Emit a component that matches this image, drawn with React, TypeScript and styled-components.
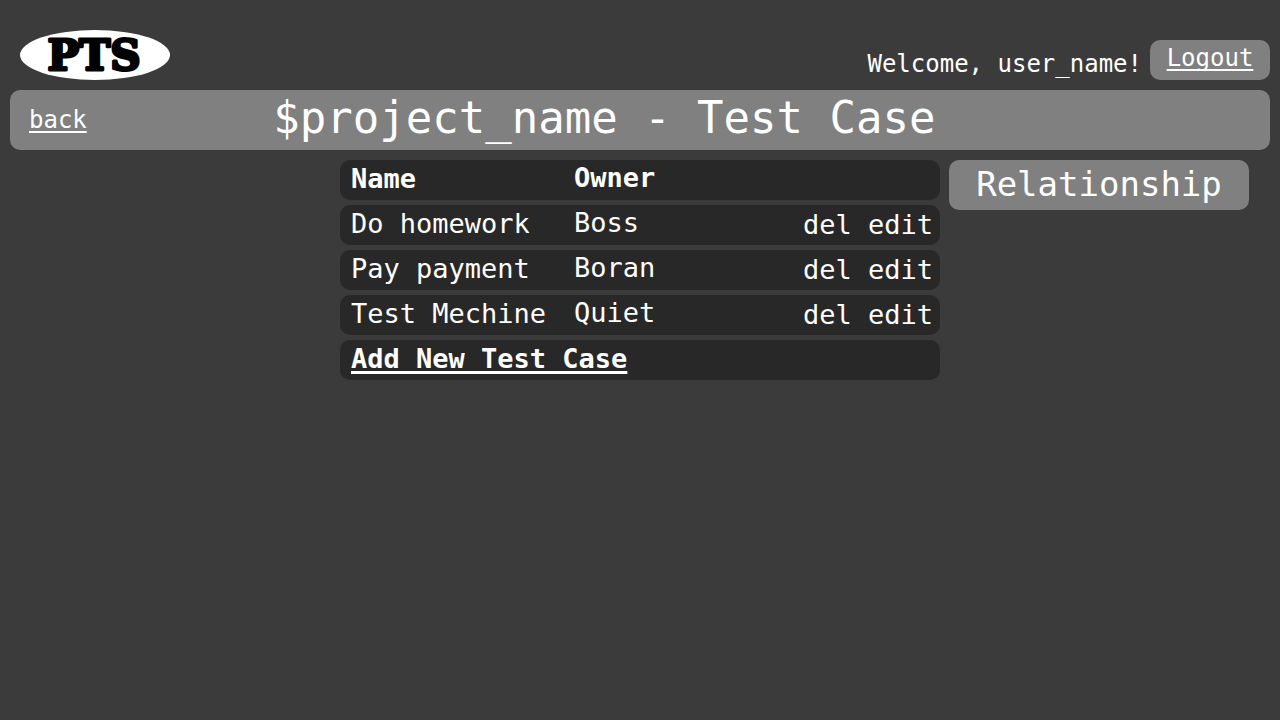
import React from "react";
import styled, { createGlobalStyle } from "styled-components";

const GlobalStyle = createGlobalStyle`
  *, *::before, *::after { box-sizing: border-box; }
  body {
    margin: 0;
    background: #3b3b3b;
    color: #fff;
    font-family: Consolas, "DejaVu Sans Mono", monospace;
  }
  button, a { color: inherit; font-family: inherit; }
`;

const Page = styled.div`
  min-height: 100vh;
  padding: 0 10px;
`;

const Header = styled.header`
  display: flex;
  align-items: flex-end;
  gap: 8px;
  padding: 30px 0 10px 10px;
`;

const Logo = styled.svg`
  display: block;
  width: 150px;
  height: 50px;
  margin-right: auto;
`;

const Welcome = styled.span`
  font-size: 24px;
  line-height: 32px;
`;

const GreyButton = styled.button`
  border: 0;
  border-radius: 10px;
  background: #808080;
  cursor: pointer;
`;

const LogoutButton = styled(GreyButton)`
  width: 120px;
  height: 40px;
  padding: 0 0 4px;
  font-size: 24px;
  text-decoration: underline 2px;
  text-underline-offset: 3px;
  text-decoration-skip-ink: none;
`;

const TitleBar = styled.div`
  display: flex;
  align-items: center;
  height: 60px;
  padding: 0 148px 0 19px;
  border-radius: 10px;
  background: #808080;
`;

const BackLink = styled.a`
  font-size: 24px;
  line-height: 28px;
  text-decoration: underline 2px;
  text-underline-offset: 3px;
  text-decoration-skip-ink: none;
`;

const Title = styled.h1`
  flex: 1;
  margin: 0;
  padding-bottom: 4px;
  font-size: 44px;
  font-weight: 400;
  line-height: 50px;
  text-align: center;
`;

const Content = styled.main`
  display: grid;
  grid-template-columns: 1fr minmax(0, 600px) 1fr;
  column-gap: 9px;
  align-items: start;
  padding-top: 5px;
`;

const CaseTable = styled.table`
  grid-column: 2;
  width: 100%;
  table-layout: fixed;
  border-collapse: separate;
  border-spacing: 0 5px;
  font-size: 27px;
  line-height: 32px;
`;

const Cell = styled.td<{ $raise?: number }>`
  height: 40px;
  padding: 0 0 ${(p) => p.$raise ?? 2}px;
  background: #282828;
  text-align: left;
  white-space: nowrap;

  &:first-child {
    padding-left: 11px;
    border-radius: 10px 0 0 10px;
  }
  &:last-child {
    padding-right: 7px;
    border-radius: 0 10px 10px 0;
  }
  &:only-child {
    border-radius: 10px;
  }
`;

const ActionCell = styled(Cell)`
  text-align: right;
`;

const NameColumn = styled.col`
  width: 39%;
`;

const OwnerColumn = styled.col`
  width: 25%;
`;

const ActionLink = styled.a`
  text-decoration: none;
`;

const AddLink = styled.a`
  font-weight: 700;
  text-decoration: underline 3px;
  text-underline-offset: 3px;
  text-decoration-skip-ink: none;
`;

const RelationshipButton = styled(GreyButton)`
  grid-column: 3;
  width: 300px;
  height: 50px;
  margin-top: 5px;
  padding: 0 0 2px;
  font-size: 34px;
`;

const cases = [
  { name: "Do homework", owner: "Boss" },
  { name: "Pay payment", owner: "Boran" },
  { name: "Test Mechine", owner: "Quiet" },
];

export default function App() {
  return (
    <>
      <GlobalStyle />
      <Page>
        <Header>
          <Logo viewBox="0 0 150 50" role="img" aria-label="PTS">
            <ellipse cx="75" cy="25" rx="75" ry="25" fill="#fff" />
            <text
              x="74"
              y="40"
              textAnchor="middle"
              fontFamily="'DejaVu Serif', serif"
              fontWeight="700"
              fontSize="42"
              stroke="#000"
              strokeWidth="3"
              strokeLinejoin="round"
            >
              PTS
            </text>
          </Logo>
          <Welcome>Welcome, user_name!</Welcome>
          <LogoutButton type="button">Logout</LogoutButton>
        </Header>
        <TitleBar>
          <BackLink href="#back">back</BackLink>
          <Title>$project_name - Test Case</Title>
        </TitleBar>
        <Content>
          <CaseTable>
            <colgroup>
              <NameColumn />
              <OwnerColumn />
              <col />
            </colgroup>
            <thead>
              <tr>
                <Cell as="th" scope="col">Name</Cell>
                <Cell as="th" scope="col" $raise={4}>Owner</Cell>
                <Cell />
              </tr>
            </thead>
            <tbody>
              {cases.map((c) => (
                <tr key={c.name}>
                  <Cell>{c.name}</Cell>
                  <Cell $raise={4}>{c.owner}</Cell>
                  <ActionCell $raise={0}>
                    <ActionLink href="#del">del</ActionLink>{" "}
                    <ActionLink href="#edit">edit</ActionLink>
                  </ActionCell>
                </tr>
              ))}
              <tr>
                <Cell colSpan={3}>
                  <AddLink href="#add">Add New Test Case</AddLink>
                </Cell>
              </tr>
            </tbody>
          </CaseTable>
          <RelationshipButton type="button">Relationship</RelationshipButton>
        </Content>
      </Page>
    </>
  );
}
